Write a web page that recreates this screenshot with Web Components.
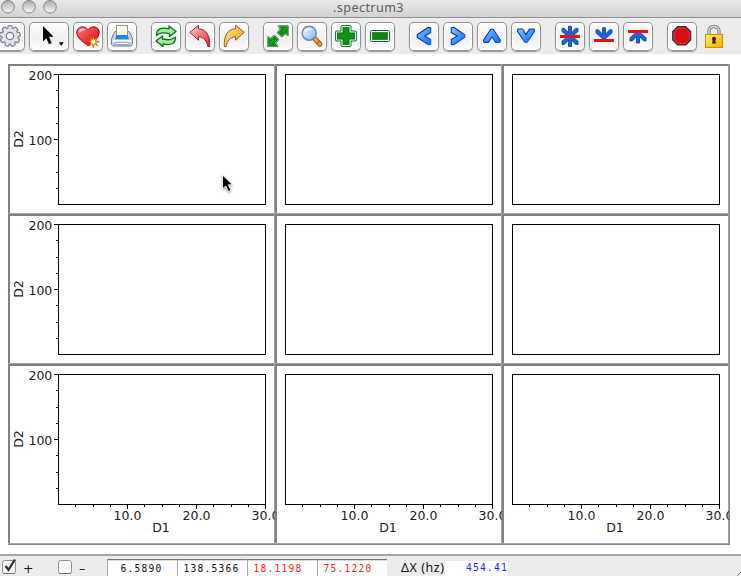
<!DOCTYPE html>
<html lang="en"><head><meta charset="utf-8"><title>.spectrum3</title>
<style>html,body{margin:0;height:576px;overflow:hidden;background:#fff}</style></head>
<body><spectrum-window></spectrum-window>
<script>
const define=(name,html,setup)=>customElements.define(name,class extends HTMLElement{
 constructor(){super();this.attachShadow({mode:'open'});}
 connectedCallback(){this.shadowRoot.innerHTML=typeof html==='function'?html(this):html;if(setup)setup(this);}
});
const rays=(n,r,R)=>Array.from({length:n*2},(_,i)=>{const a=Math.PI*i/n,q=i%2?r:R;return (Math.cos(a)*q).toFixed(2)+','+(Math.sin(a)*q).toFixed(2)}).join(' ');
const grad=(id,a,b)=>`<linearGradient id="${id}" x1="0" y1="0" x2="1" y2="1"><stop stop-color="${a}"/><stop offset="1" stop-color="${b}"/></linearGradient>`;
const cog=Array.from({length:9},(_,i)=>`<rect x="-2.2" y="-10.3" width="4.4" height="5" rx="1.6" transform="rotate(${i*40})"/>`).join('');
const chev=(d)=>`<defs>${grad('g','#8accff','#0068f5')}<linearGradient id="o" x1="0" y1="0" x2="1" y2="1"><stop offset=".4" stop-color="#0d2f9e"/><stop offset="1" stop-color="#1a6ee8"/></linearGradient></defs><path d="${d}" fill="url(#g)" stroke="url(#o)" stroke-width="1.1" stroke-linejoin="round"/>`;
const recyc='M5.5 13.5 C5.5 6.5 10 5 18 6.7 L18 4 L25 9.5 L18.5 14.5 L18.5 11.6 C12 10.3 9.5 10.5 5.5 13.5Z';
const expand='M24.8 4.3 V13 L22.3 11 L18.8 14.2 L14.8 10.6 L18.2 7.2 L15.8 4.3Z';
const downArrow='M13.5 5.5 H16.5 V12 L20.6 7.6 H23 V10.8 L16 16.8 H14 L7 10.8 V7.6 H9.4 L13.5 12Z';
const blue='fill="#1468dc" stroke="#0f3788" stroke-width=".8" stroke-linejoin="round"';
const cross='M11.5 5 H18.5 V10.5 H24 V17.5 H18.5 V23 H11.5 V17.5 H6 V10.5 H11.5Z';
const icons={
 gear:`<g transform="translate(15 14)"><g fill="#e6e7f3" stroke="#7d7d96" stroke-width="1.2">${cog}</g><circle r="7.6" fill="#e3e4f1"/><circle r="3.7" fill="#fafafa" stroke="#7d7d96" stroke-width="1.3"/></g>`,
 pointer:`<path d="M14 4 V19.5 L17.4 16.2 L20 22.2 L22.7 21 L20 14.8 H24.6Z" fill="#000"/><path d="M30 20.3 H34.6 L32.3 24Z" fill="#000"/>`,
 heart:`<defs>${grad('h','#ff7a76','#d0000a')}</defs><path d="M15 24 C12 21 3.8 16.8 3.8 10.5 C3.8 4.2 11.5 3 15 7.8 C18.5 3 26.2 4.2 26.2 10.5 C26.2 16.8 18 21 15 24Z" fill="url(#h)" stroke="#a00b13"/><path d="M6 11 C6 6.5 9.5 5.2 13 8 C10 8 8 9 6 11Z" fill="#ffc5c1"/><g transform="translate(20.3 19.7)"><polygon points="${rays(8,2.2,6)}" fill="#ffe94e" stroke="#d65500" stroke-width=".8"/><circle r="2" fill="#fffbd0"/></g>`,
 print:`<path d="M6.5 12 L8 9.5 H22 L23.5 12 L25.5 17 V22.5 L24 24 H6 L4.5 22.5 V17Z" fill="#cdd1e4" stroke="#737a9e"/><path d="M9.5 3.5 H20.5 V14 H9.5Z" fill="#fffbe4" stroke="#8e93ad"/><path d="M9.5 13 H20.5 L22 17.3 H8Z" fill="#1a86ee"/><path d="M5.5 18 H24.5 V20 H5.5Z" fill="#f8f9ff"/><path d="M8.5 20.3 H21.5 L22.5 22.7 H7.5Z" fill="#fff" stroke="#7e849f" stroke-width=".8"/>`,
 refresh:`<g fill="#96f48f" stroke="#176b25" stroke-width="1.3" stroke-linejoin="round"><path d="${recyc}"/><path d="${recyc}" transform="rotate(180 15 14.3)"/></g>`,
 undo:`<defs>${grad('u','#ffd4d4','#f01c27')}</defs><path d="M4.8 10.3 L13.5 3.3 V6.8 C21 7.2 25.3 13 24.7 24.5 H22.8 C21.8 19 19 15.4 13.5 14.6 V18.2Z" fill="url(#u)" stroke="#8d2531" stroke-linejoin="round"/>`,
 redo:`<defs>${grad('r','#ffe8a0','#ff9a00')}</defs><path d="M25.2 10.3 L16.5 3.3 V6.8 C9 7.2 4.7 13 5.3 24.5 H7.2 C8.2 19 11 15.4 16.5 14.6 V18.2Z" fill="url(#r)" stroke="#806030" stroke-linejoin="round"/>`,
 expand:`${['','rotate(180 15 14.1)'].map(t=>`<g transform="${t}" stroke-linejoin="round"><path d="${expand}" stroke="#1c6a3b" stroke-width="2"/><path d="${expand}" stroke="#dff7dd" stroke-width=".9"/><path d="${expand}" fill="#0a8f10"/><path d="M23.6 5.5 L19.4 10.2" stroke="#38bd38"/></g>`).join('')}`,
 search:`<path d="M17.6 16.5 L23 22.2" stroke="#9c4931" stroke-width="5" stroke-linecap="round"/><path d="M18.3 17.2 L23 22.2" stroke="#ffae1a" stroke-width="3" stroke-linecap="round"/><path d="M20.2 21.5 L22.5 19.2" stroke="#e53a1b" stroke-width="1.2"/><defs>${grad('s','#f2fbff','#79b6ff')}</defs><circle cx="12.2" cy="11.2" r="7" fill="url(#s)" stroke="#7881a7" stroke-width="1.5"/><path d="M7.5 11 C8 7 12 5.5 15 7 C12 8 10 8 7.5 11Z" fill="#fff"/>`,
 plus:`<g stroke-linejoin="round"><path d="${cross}" stroke="#1e6032" stroke-width="4"/><path d="${cross}" stroke="#edffed" stroke-width="2.2"/><path d="${cross}" fill="#0b9610"/><path d="M12.3 5.8 H17.7 V11.3 H23.2 V16.7 H17.7 V22.2 H12.3 V16.7 H6.8 V11.3 H12.3Z" fill="#0b9610" stroke="#14702a" stroke-width=".8"/></g>`,
 minus:`<rect x="5.5" y="8.5" width="19" height="11" rx="1" fill="#edffed" stroke="#1e6032"/><rect x="7.5" y="10.5" width="15" height="7" fill="#07870e" stroke="#176b20" stroke-width=".7"/>`,
 left:chev('M19.3 5.2 L21.7 5.8 V10.8 L15.7 14 L21.7 17.4 V22.4 L19.3 22.8 L8.2 15.2 V12.8Z'),
 right:chev('M10.7 5.2 L8.3 5.8 V10.8 L14.3 14 L8.3 17.4 V22.4 L10.7 22.8 L21.8 15.2 V12.8Z'),
 up:chev('M13.8 7.2 H16.2 L23.6 18.2 L23 20.4 H18.5 L15 14.8 L11.5 20.4 H7 L6.4 18.2Z'),
 down:chev('M13.8 20.2 H16.2 L23.6 9.2 L23 7 H18.5 L15 12.6 L11.5 7 H7 L6.4 9.2Z'),
 middle:`<path d="${downArrow}" transform="translate(0 -1.2)" ${blue}/><path d="${downArrow}" transform="translate(0 30) scale(1 -1)" ${blue}/><path d="M5 13 H25 V16 H5Z" fill="#f30b15"/>`,
 bottom:`<path d="${downArrow}" transform="translate(0 .2)" ${blue}/><path d="M5 17 H25 V20 H5Z" fill="#f30b15"/>`,
 top:`<path d="${downArrow}" transform="translate(0 26.5) scale(1 -1)" ${blue}/><path d="M5 8 H25 V11 H5Z" fill="#f30b15"/>`,
 stop:`<path d="M10.7 4.5 H18.7 L23.7 9.5 V18 L18.7 23 H10.7 L5.7 18 V9.5Z" fill="#d60d13" stroke="#17305d" stroke-width="1.1"/><path d="M11.3 6 H18.2 L22.2 10 V17.5 L18.2 21.5 H11.3 L7.2 17.5 V10Z" fill="none" stroke="#ff6262" stroke-width=".7" stroke-dasharray="1 .5"/>`
};
define('tool-icon',el=>{const w=el.getAttribute('name')==='pointer'?40:30;return `<style>:host{display:block;width:${w}px;height:29px}svg{display:block}</style><svg width="${w}" height="29">${icons[el.getAttribute('name')]}</svg>`});
define('tool-button',`<style>:host{display:block;box-sizing:border-box;height:29px;border-radius:5px;background:linear-gradient(#fff,#f3f3f3 45%,#f0f0f0 60%,#fdfdfd);box-shadow:inset 0 0 0 1px #929292,inset 0 0 0 2px #fff,0 1px 1px #999}</style><slot></slot>`);
define('pad-lock',`<style>:host{display:block;margin-left:4px;width:18px;height:25px}svg{display:block}</style><svg width="18" height="25"><defs>${grad('l','#fff06a','#f6ad00')}</defs><path d="M4 11.5 V7 C4 1 14 1 14 7 V11.5" fill="none" stroke="#777d88" stroke-width="3.4"/><path d="M4 11.5 V7 C4 1 14 1 14 7 V11.5" fill="none" stroke="#d8dde3" stroke-width="1.4"/><rect x=".5" y="10.5" width="17" height="13" fill="url(#l)" stroke="#c99000"/><circle cx="9" cy="14.8" r="2" fill="#3b1c05"/><path d="M8 15 H10 L11 19.5 H7Z" fill="#3b1c05"/></svg>`);
const groups=[['gear','pointer','heart','print'],['refresh','undo','redo'],['expand','search','plus','minus'],['left','right','up','down'],['middle','bottom','top'],['stop']];
define('tool-bar',`<style>:host{display:flex;align-items:center;gap:14px;height:36px;box-sizing:border-box;margin-left:-5px;background:#ececec}.g{display:flex;gap:4px;align-items:center}pad-lock{margin-left:-6px}</style>${groups.map(g=>`<div class="g">${g.map(n=>`<tool-button><tool-icon name="${n}"></tool-icon></tool-button>`).join('')}</div>`).join('')}<pad-lock></pad-lock>`);
define('title-bar',`<style>:host{display:grid;grid-template-columns:66px 1fr 70px;box-sizing:border-box;height:18px;background:linear-gradient(#e9e9e9,#d2d2d2);border-bottom:1px solid #929292;font:12.6px/15px "Noto Sans",sans-serif;color:#5c5c5c}svg{display:block}.t{text-align:center;letter-spacing:.42px}</style><svg width="66" height="17"><defs><linearGradient id="b" x1="0" y1="0" x2="0" y2="1"><stop stop-color="#aaa"/><stop offset=".5" stop-color="#d4d4d4"/><stop offset="1" stop-color="#f6f6f6"/></linearGradient></defs>${[8,29,50].map(x=>`<circle cx="${x}" cy="6.8" r="6.3" fill="url(#b)" stroke="#858585"/>`).join('')}</svg><div class="t"><slot></slot></div>`);
define('spectrum-plot',el=>{
 const first=el.hasAttribute('y-axis'),last=el.hasAttribute('x-axis'),w=first?267:227,h=last?180:150,x=first?50.5:10.5;
 let s='';
 if(first){for(let i=0;i<8;i++){const y=Math.round(10+i*16.25)+.5;s+=`<path d="M${x-(i%4?2.5:4.5)} ${y}H${x}"/>`}}
 if(last){for(let i=1;i<=12;i++){const px=Math.round(x-.5+i*17.25)+.5;s+=`<path d="M${px} 140V${i%4?143:145}"/>`}}
 let t='';
 if(first)t+=`<text x="44.3" y="15.5" text-anchor="end">200</text><text x="44.3" y="80.5" text-anchor="end">100</text><text transform="translate(15 75) rotate(-90)" text-anchor="middle">D2</text>`;
 if(last)t+=[10,20,30].map((v,i)=>`<text x="${x+69*(i+1)}" y="156" text-anchor="middle">${v}.0</text>`).join('')+`<text x="${x+102.5}" y="168" text-anchor="middle">D1</text>`;
 return `<style>:host{display:block;width:${w}px;height:${h}px;overflow:hidden}svg{display:block}text{font:12.5px "DejaVu Sans",sans-serif;fill:#1b1b1b}</style><svg width="${w}" height="${h}"><path d="M1 0V${h}M0 1H${w}" stroke="#808080" stroke-width="2"/><path d="M${w-.5} 0V${h}M0 ${h-.5}H${w}" stroke="#a5a5a5"/>${t}<g fill="none" stroke="#000" stroke-width="1" shape-rendering="crispEdges"><rect x="${x}" y="10.5" width="207" height="130"/>${s}</g></svg>`;
});
define('plot-grid',`<style>:host{display:grid;grid-template-columns:267px 227px 227px;grid-template-rows:150px 150px 180px;width:721px;margin:10px 0 0 8px;border:solid #858585;border-width:0 1px 1px 0}</style>${[0,1,2].map(r=>[0,1,2].map(c=>`<spectrum-plot ${c?'':'y-axis'} ${r===2?'x-axis':''}></spectrum-plot>`).join('')).join('')}`);
define('check-option',el=>`<style>:host{display:flex;align-items:center;gap:7px;font:12.5px/16px "DejaVu Sans",sans-serif}svg{display:block;overflow:visible}span{padding-top:3px}</style><svg width="14" height="16"><rect x=".5" y="1.5" width="13" height="13" rx="2" fill="#f7f7f7" stroke="#909090"/><path d="M1 14.5H13" stroke="#737373"/>${el.hasAttribute('checked')?'<path d="M3.5 7 L6.5 10.8 L13 .5" fill="none" stroke="#333" stroke-width="2.3"/>':''}</svg><span><slot></slot></span>`);
define('value-field',`<style>:host{display:block;box-sizing:border-box;width:70px;height:17px;background:#fff;border-top:1px solid #777;border-left:1px solid #aaa;box-shadow:inset 0 1px #ddd;font:9.6px/17px "DejaVu Sans Mono",monospace;letter-spacing:1.22px;padding-left:5.5px}:host(.short){padding-left:12.5px}</style><slot></slot>`);
define('status-bar',`<style>:host{display:flex;align-items:flex-start;height:22px;box-sizing:border-box;border-top:2px solid #a5a5a5;background:#ececec;padding:3px 0 0 2px;font:12.5px/16px "Noto Sans",sans-serif;color:#111}check-option{width:56px;margin-top:-1.5px}.fields{display:flex;margin-left:-7px}.label{margin:.5px 0 0 14px;width:44px;white-space:nowrap;letter-spacing:.55px}.delta{box-sizing:border-box;width:63px;height:15px;margin-top:2px;background:#fff;font:9.6px/14px "DejaVu Sans Mono",monospace;letter-spacing:1.22px;padding-left:21px;color:#2222f5}.red{color:#fa1c1c}.grip{margin-left:auto;align-self:flex-end}</style><check-option checked>+</check-option><check-option>–</check-option><div class="fields"><value-field class="short">6.5890</value-field><value-field>138.5366</value-field><value-field class="red">18.1198</value-field><value-field class="red">75.1220</value-field></div><span class="label">ΔX (hz)</span><span class="delta">454.41</span><svg class="grip" width="4" height="4"><path d="M0 4L4 0" stroke="#777"/></svg>`);
define('mouse-pointer',`<style>:host{position:absolute;left:221px;top:174px;filter:drop-shadow(0 1px 1px #999)}svg{display:block}</style><svg width="14" height="20"><path d="M1.5 1 V15 L4.7 12 L7.3 17.5 L10 16.3 L7.4 10.8 H11.5Z" fill="#000" stroke="#fff" stroke-width=".9"/></svg>`);
define('spectrum-window',`<style>:host{position:relative;display:flex;flex-direction:column;width:741px;height:576px;overflow:hidden;background:#fff}status-bar{margin-top:auto;flex:none}</style><title-bar>.spectrum3</title-bar><tool-bar></tool-bar><plot-grid></plot-grid><status-bar></status-bar><mouse-pointer></mouse-pointer>`);
</script></body></html>
